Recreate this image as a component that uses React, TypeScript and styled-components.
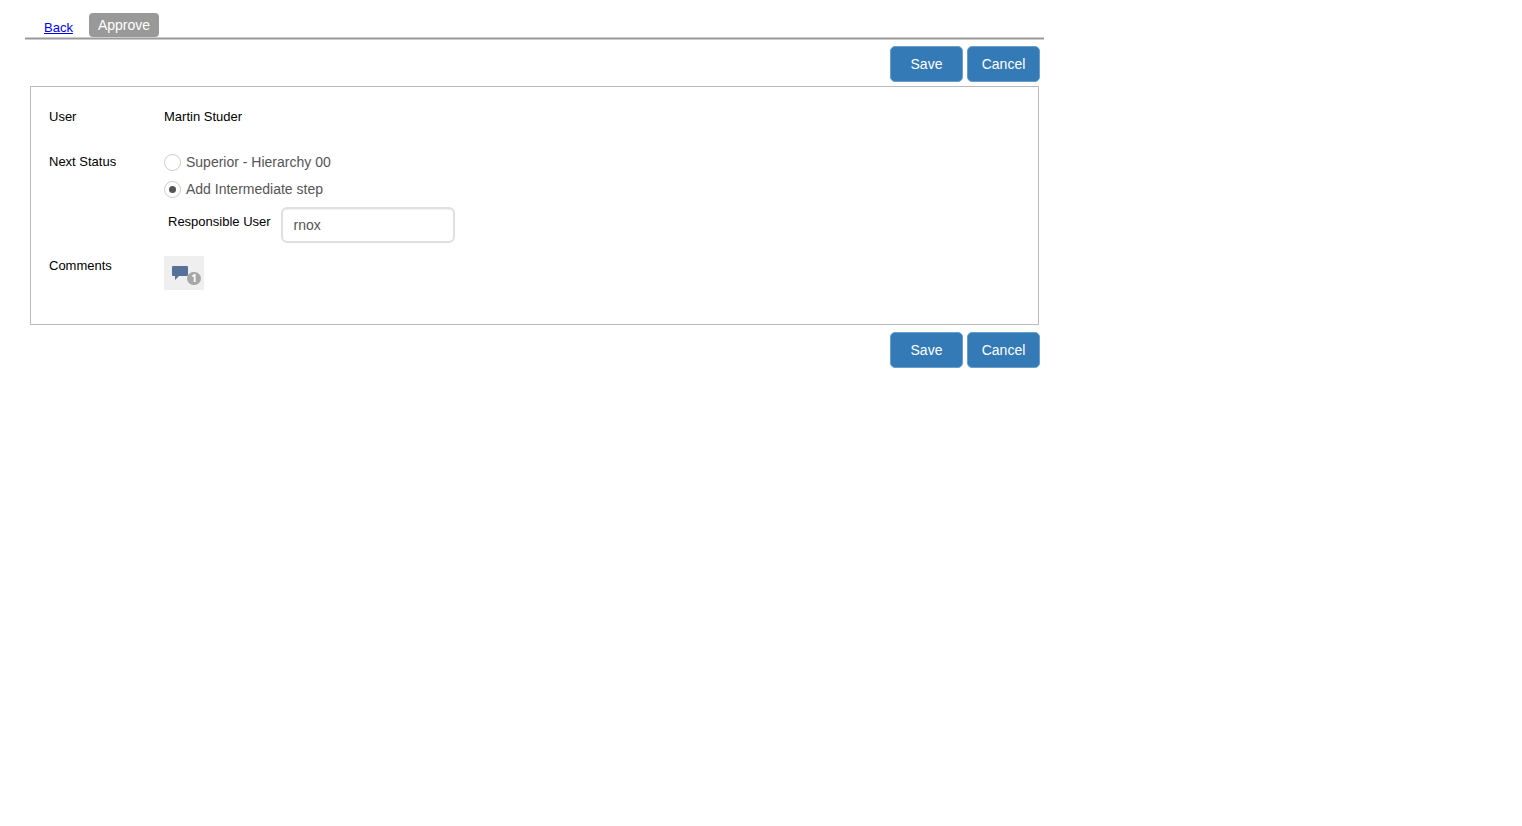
import React, { useState } from "react";
import styled, { createGlobalStyle } from "styled-components";

const GlobalStyle = createGlobalStyle`
  *, *::before, *::after {
    box-sizing: border-box;
  }
  body {
    margin: 0;
    background: #fff;
    color: #000;
    font-family: "Liberation Sans", Arial, sans-serif;
    font-size: 13px;
    line-height: 16px;
  }
  button, input {
    font-family: inherit;
  }
`;

const Page = styled.main`
  max-width: 1044px;
  padding: 13px 0 0 25px;
`;

const TabBar = styled.nav`
  display: flex;
  align-items: flex-end;
  gap: 16px;
  padding-left: 19px;
  height: 24px;
`;

const BackLink = styled.a`
  color: #0000ee;
  padding-bottom: 1px;
`;

const Tab = styled.button`
  height: 24px;
  padding: 0 9px;
  border: 0;
  border-radius: 4px;
  background: #999;
  color: #fff;
  font-size: 14px;
  line-height: 24px;
`;

const Rule = styled.hr`
  margin: 0;
  height: 3px;
  border: 0 solid #ccc;
  border-width: 1px 0;
  background: #999;
`;

const Form = styled.form`
  padding: 0 5px;
`;

const Actions = styled.div<{ $bottom?: boolean }>`
  display: flex;
  justify-content: flex-end;
  gap: 4px;
  padding: ${(p) => (p.$bottom ? "7px 0 0" : "6px 0 4px")};
  margin-right: -1px;
`;

const ActionButton = styled.button`
  width: 73px;
  height: 36px;
  padding: 0;
  border: 1px solid #6b9fcb;
  border-radius: 5px;
  background: #337ab7;
  color: #fff;
  font-size: 14px;
  line-height: 20px;
  cursor: pointer;
`;

const Panel = styled.section`
  border: 1px solid #bbb;
  padding: 22px 18px 34px;
`;

const Row = styled.div<{ $gap?: number }>`
  display: grid;
  grid-template-columns: 115px 1fr;
  margin-bottom: ${(p) => p.$gap || 0}px;
`;

const RowLabel = styled.span`
  padding-top: 2px;
`;

const Choices = styled.div`
  display: flex;
  flex-direction: column;
  align-items: flex-start;
  gap: 7px;
`;

const Choice = styled.label`
  display: flex;
  align-items: center;
  gap: 5px;
  height: 20px;
  color: #555;
  font-size: 14px;
  line-height: 20px;
`;

const Radio = styled.input`
  appearance: none;
  display: grid;
  place-items: center;
  width: 17px;
  height: 17px;
  margin: 0;
  border: 1px solid #ccc;
  border-radius: 50%;
  background: #fff;

  &:checked::before {
    content: "";
    width: 7px;
    height: 7px;
    border-radius: 50%;
    background: #555;
  }
`;

const Field = styled.div`
  display: flex;
  gap: 10px;
  padding: 1px 0 0 4px;
`;

const FieldLabel = styled.label`
  padding-top: 7px;
`;

const TextInput = styled.input`
  width: 174px;
  height: 36px;
  padding: 6px 11px;
  border: 2px solid #e0e0e0;
  border-radius: 6px;
  background: #fff;
  box-shadow: inset 0 1px 1px rgba(0, 0, 0, 0.05);
  color: #555;
  font-size: 14px;
  line-height: 20px;
`;

const CommentButton = styled.button`
  position: relative;
  display: flex;
  width: 40px;
  height: 34px;
  padding: 10px 8px;
  border: 0;
  background: #efefef;
  cursor: pointer;
`;

const Badge = styled.span`
  position: absolute;
  right: 3px;
  bottom: 5px;
  width: 14px;
  height: 13px;
  border-radius: 7px;
  background: #a6a6a6;
  color: #fff;
  font-family: "Open Sans", sans-serif;
  font-size: 10px;
  font-weight: bold;
  line-height: 13px;
  text-align: center;
`;

function FormActions({ bottom }: { bottom?: boolean }) {
  return (
    <Actions $bottom={bottom}>
      <ActionButton type="submit">Save</ActionButton>
      <ActionButton type="button">Cancel</ActionButton>
    </Actions>
  );
}

export default function App() {
  const [status, setStatus] = useState("intermediate");
  const [user, setUser] = useState("rnox");

  return (
    <Page>
      <GlobalStyle />
      <TabBar>
        <BackLink href="#back">Back</BackLink>
        <Tab type="button">Approve</Tab>
      </TabBar>
      <Rule />
      <Form onSubmit={(e) => e.preventDefault()}>
        <FormActions />
        <Panel>
          <Row $gap={27}>
            <span>User</span>
            <span>Martin Studer</span>
          </Row>
          <Row $gap={13} role="radiogroup" aria-labelledby="next-status">
            <RowLabel id="next-status">Next Status</RowLabel>
            <Choices>
              <Choice>
                <Radio
                  type="radio"
                  name="status"
                  checked={status === "superior"}
                  onChange={() => setStatus("superior")}
                />
                Superior - Hierarchy 00
              </Choice>
              <Choice>
                <Radio
                  type="radio"
                  name="status"
                  checked={status === "intermediate"}
                  onChange={() => setStatus("intermediate")}
                />
                Add Intermediate step
              </Choice>
              <Field>
                <FieldLabel htmlFor="responsible">Responsible User</FieldLabel>
                <TextInput
                  id="responsible"
                  type="text"
                  value={user}
                  onChange={(e) => setUser(e.target.value)}
                />
              </Field>
            </Choices>
          </Row>
          <Row>
            <RowLabel>Comments</RowLabel>
            <CommentButton type="button" aria-label="Comments">
              <svg width="16" height="15" viewBox="0 0 16 15" aria-hidden="true">
                <path
                  d="M1 0h14q1 0 1 1v8q0 1-1 1H7l-4 4v-4H1q-1 0-1-1V1q0-1 1-1z"
                  fill="#577199"
                />
              </svg>
              <Badge>1</Badge>
            </CommentButton>
          </Row>
        </Panel>
        <FormActions bottom />
      </Form>
    </Page>
  );
}
